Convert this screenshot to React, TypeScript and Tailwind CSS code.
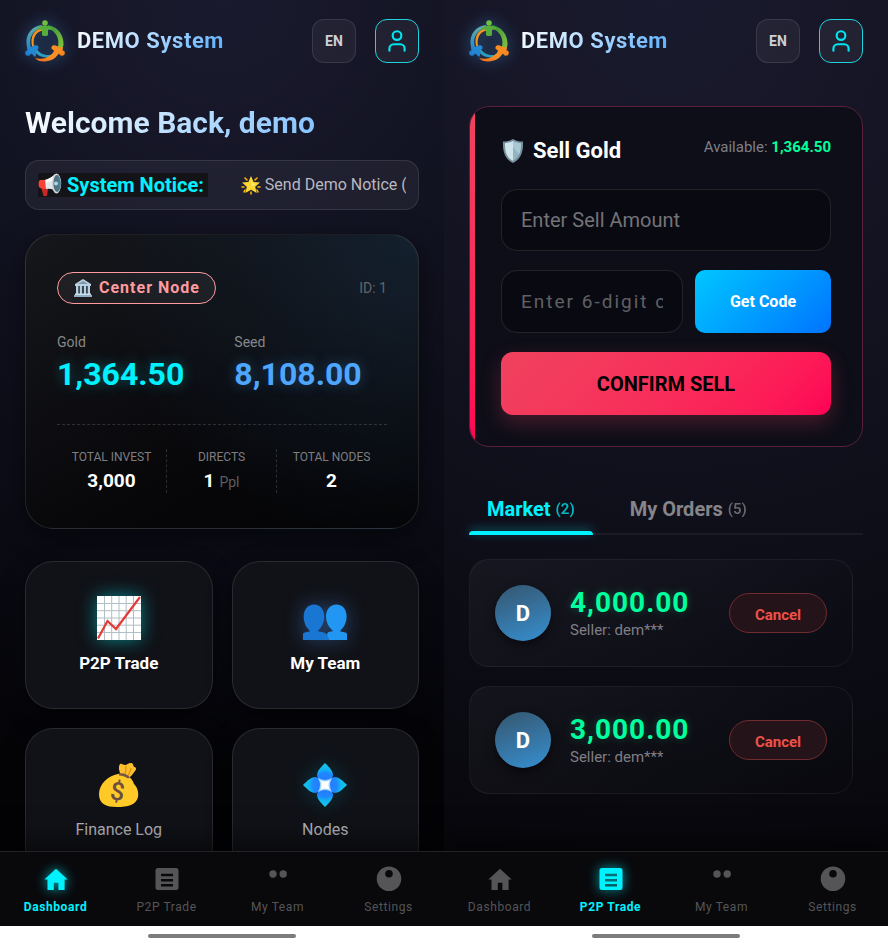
import React from "react";
import { User } from "lucide-react";

type Tab = "Dashboard" | "P2P Trade" | "My Team" | "Settings";

const tabs: Tab[] = ["Dashboard", "P2P Trade", "My Team", "Settings"];

const orders = [
  { id: 1, amount: "4,000.00", seller: "dem***" },
  { id: 2, amount: "3,000.00", seller: "dem***" },
];

const stats = [
  { label: "TOTAL INVEST", value: "3,000", unit: "" },
  { label: "DIRECTS", value: "1", unit: "Ppl" },
  { label: "TOTAL NODES", value: "2", unit: "" },
];

/* Icons */

const Logo = ({ id }: { id: string }) => (
  <svg
    viewBox="0 0 40 42"
    className="h-[42px] w-10 drop-shadow-[0_0_8px_rgba(79,172,254,0.45)]"
    aria-hidden="true"
  >
    <defs>
      <linearGradient id={`${id}-g`} x1="0" y1="0" x2="1" y2="1">
        <stop offset="0" stopColor="#2f8f3a" />
        <stop offset="1" stopColor="#8cc63f" />
      </linearGradient>
      <linearGradient id={`${id}-b`} x1="0" y1="0" x2="0" y2="1">
        <stop offset="0" stopColor="#63ada0" />
        <stop offset="1" stopColor="#2389cf" />
      </linearGradient>
      <linearGradient id={`${id}-o`} x1="0" y1="1" x2="1" y2="0">
        <stop offset="0" stopColor="#f26a1b" />
        <stop offset="1" stopColor="#ffab2e" />
      </linearGradient>
    </defs>
    {/* inner ring */}
    <path d="M17 8C9 10 5 16 7 26l2.500 2C7 19 10 12 18 10.500z" fill="#f7941e" />
    <path d="M8 29c4 8 12 10 20 7l3-3c-8 4-16 2-20-5z" fill="#2c9fc0" />
    <path d="M34 22c0 7-5 13-14 16 9 0 16-5 17-14z" fill="#7cc142" />
    {/* outer ring */}
    <path d="M17 5C7 6 .500 14 1.500 24c.200 2 .700 4 1.500 6l3.500-1C2.500 18 8 10 17 8z" fill={`url(#${id}-b)`} />
    <path d="M23 5c10 2 16 10 15.500 20l-1.500 5-4-2c2-9-2-17-10-19.500z" fill={`url(#${id}-g)`} />
    <path d="M35 31c-3 7-9 10.500-16 10.500-4 0-7-1-9-3.500 9 2 15-.500 20.500-8z" fill={`url(#${id}-o)`} />
    {/* top figure */}
    <circle cx="20" cy="3" r="2.800" fill="#6fbf44" />
    <path d="M12 9c2-3 5-3.500 8-3.500S26 6 28 9l-5 1v4.500c0 1-1 1.500-3 1.500s-3-.500-3-1.500V10z" fill="#57ad3c" />
    {/* left figure */}
    <circle cx="3" cy="33" r="2.800" fill="#1f7fd0" />
    <path d="M2 27c2 1 4 0 6-1s5-1 5.500 1-1 2.500-2.500 3.500c1 2 0 5-1 6.500L7 34l-4-1z" fill="#2487d4" />
    {/* right figure */}
    <circle cx="37" cy="33" r="2.800" fill="#f7831e" />
    <path d="M38 27c-2 1-4 0-6-1s-5-1-5.500 1 1 2.500 2.500 3.500c-1 2-1 4 0 6.500l4-3 4-1z" fill="#f98d22" />
  </svg>
);

const Megaphone = () => (
  <svg viewBox="0 0 24 24" className="h-6 w-6 shrink-0" aria-hidden="true">
    <path d="M5 14l5 2-1 7H5.500L3 14z" fill="#c62828" />
    <path d="M2 7c-2 1-2 7 0 8l4 1h4l1-10-5 1z" fill="#f44336" />
    <path d="M7 7c4-1 7-3 10-6l3 19c-3-3-7-5-12-4z" fill="#dfe7ea" />
    <path d="M8 7l8-4v4L8 10z" fill="#fafafa" />
    <ellipse cx="18.500" cy="10.500" rx="4.700" ry="10" fill="#cfd8dc" />
    <ellipse cx="19" cy="10.500" rx="3.600" ry="8.500" fill="#546e7a" />
    <path d="M19 2c2 1 3.600 4 3.600 8.500S21 18 19 19c1-5 1-12 0-17z" fill="#3e7f91" />
    <circle cx="18" cy="10.500" r="2" fill="#b0d5e0" />
  </svg>
);

const GlowStar = () => (
  <svg viewBox="0 0 20 20" className="h-5 w-5 shrink-0" aria-hidden="true">
    <path
      d="M4 3l2 2M16 3l-2 2M1 12h2M17 12h2M10 17v2M4 15l-1 2M16 15l1 2"
      stroke="#ffb300"
      strokeWidth="1.600"
      strokeLinecap="round"
    />
    <path d="M10 1l2.600 6 6.400.6-4.800 4.200 1.500 6.200L10 14.700 4.300 18l1.500-6.200L1 7.600 7.400 7z" fill="#fdd835" />
    <path d="M10 4l1.500 4.500 3.500.5-4 2z" fill="#fff176" />
  </svg>
);

const Building = () => (
  <svg viewBox="0 0 20 20" className="h-5 w-5 shrink-0" aria-hidden="true">
    <path d="M10 1l8 5v2H2V6z" fill="#b8d0e2" />
    <path d="M10 3l5 3H5z" fill="#7d97ab" />
    <path d="M3 8h14v8H3z" fill="#37474f" />
    <path d="M3 8h2.200v8H3zM6.900 8h2v8h-2zM11 8h2v8h-2zM14.800 8H17v8h-2.200z" fill="#b8d0e2" />
    <path d="M2 15.500h16V17H2z" fill="#cfe0ed" />
    <path d="M1 17h18v2H1z" fill="#93afc3" />
  </svg>
);

const Shield = () => (
  <svg viewBox="0 0 24 26" className="h-[26px] w-6 shrink-0" aria-hidden="true">
    <path d="M12 1c3 2 6 2.500 10 2.500C22.500 14 20 21 12 25 4 21 1.500 14 2 3.500 6 3.500 9 3 12 1z" fill="#78909c" />
    <path d="M12 3c3 1.600 5 2 8 2.200C20.200 14 18 19.500 12 22.800 6 19.500 3.800 14 4 5.200 7 5 9 4.600 12 3z" fill="#90b4c1" />
    <path d="M12 3v19.800C6 19.500 3.800 14 4 5.200 7 5 9 4.600 12 3z" fill="#cfe3ea" />
    <path d="M12 3c3 1.600 5 2 8 2.200 0 5-.6 8-2 11L12 9z" fill="#a9c8d3" />
  </svg>
);

const ChartIcon = () => (
  <svg viewBox="0 0 44 44" className="h-11 w-11 drop-shadow-[0_0_9px_rgba(0,242,254,0.5)]" aria-hidden="true">
    <rect width="44" height="44" fill="#fff" />
    <path
      d="M7.500 0v44M14.700 0v44M22 0v44M29.200 0v44M36.500 0v44M0 7.500h44M0 14.700h44M0 22h44M0 29.200h44M0 36.500h44"
      stroke="#b0bec5"
      strokeWidth="1"
    />
    <path d="M1 42.500L10.500 25l8.500 8L43 1" fill="none" stroke="#e53935" strokeWidth="2.200" />
  </svg>
);

const PeopleIcon = () => (
  <svg viewBox="0 0 44 44" className="h-11 w-11 drop-shadow-[0_0_10px_rgba(79,150,254,0.4)]" aria-hidden="true">
    <path
      d="M11 8.500c6.500 0 10.300 5 10.300 12 0 6-2.800 11-6.300 14.500 1 1 4 .8 6 1.500 3 1 4 3 4.500 7.500H0v-6c0-2 5-1.600 7-3C3 31.500.7 26.500.7 20.500.7 13.500 4.500 8.500 11 8.500z"
      fill="#1976d2"
    />
    <path
      d="M33.500 8.500c6.500 0 10.100 5 10.100 12 0 6-2.600 11-6.600 14.500 2 1.400 7 1 7 3v6H25.500c.3-3-2.500-4-1-7 1-2 4.500-1 5.500-2-4-3.500-7-8.500-7-14.500 0-7 4-12 10.500-12z"
      fill="#2196f3"
    />
  </svg>
);

const MoneyIcon = () => (
  <svg viewBox="0 0 44 44" className="h-11 w-11" aria-hidden="true">
    <path d="M24 12c-2-4-3-8-1-11 2-1 3 1 5 1s3-2 6-2c2 0 2 2 3 4 2 0 3 2 1 4-2 3-4 5-6 7z" fill="#fbc02d" />
    <path d="M29 3c0 4 0 7-2 10M34 5c0 3-2 6-4 9" fill="none" stroke="#e08e0b" strokeWidth="1.200" />
    <path d="M21 11c7-1 14 3 16 10 3 3 5 8 4 13-2 8-10 10-21 10C9 44 2 41 2 31c0-10 9-18 19-20z" fill="#ffca28" />
    <path d="M22 10.500c4-1 9 1 11 4l-2 1c-3-2-6-3-9-3z" fill="#795548" />
    <text
      x="20.500"
      y="37"
      textAnchor="middle"
      fill="#6d4c41"
      transform="rotate(8 20 28)"
      className="font-['Roboto',sans-serif] text-[25px] font-medium"
    >
      $
    </text>
  </svg>
);

const NodeIcon = () => (
  <svg viewBox="0 0 44 44" className="h-11 w-11 drop-shadow-[0_0_10px_rgba(0,200,254,0.2)]" aria-hidden="true">
    <defs>
      <radialGradient id="petal" gradientUnits="userSpaceOnUse" cx="22" cy="22" r="22">
        <stop offset="0.200" stopColor="#2979ff" />
        <stop offset="0.550" stopColor="#1e88ff" />
        <stop offset="0.700" stopColor="#12b3ee" />
        <stop offset="1" stopColor="#18c8ee" />
      </radialGradient>
    </defs>
    <path d="M22 0c5 5 8 8 8 13l-2 4h-12l-2-4c0-5 3-8 8-13z" fill="url(#petal)" />
    <path d="M22 44c5-5 8-8 8-13l-2-4h-12l-2 4c0 5 3 8 8 13z" fill="url(#petal)" />
    <path d="M0 22c5-5 8-8 13-8l4 2v12l-4 2c-5 0-8-3-13-8z" fill="url(#petal)" />
    <path d="M44 22c-5-5-8-8-13-8l-4 2v12l4 2c5 0 8-3 13-8z" fill="url(#petal)" />
    <path d="M15 15q7 4 14 0-4 7 0 14-7-4-14 0 4-7 0-14z" fill="#9fd4ff" />
    <path d="M17 17q5 3 10 0-3 5 0 10-5-3-10 0 3-5 0-10z" fill="#fff" />
  </svg>
);

const NavIcon = ({ tab }: { tab: Tab }) => {
  switch (tab) {
    case "Dashboard":
      return <path d="M12 2.800L.3 13.500H3.500V24H9.800V16.800h4.600V24h6.200V13.500h3.100z" fill="currentColor" />;
    case "P2P Trade":
      return (
        <path
          fillRule="evenodd"
          d="M3 2h18a2.500 2.500 0 012.500 2.500v17A2.500 2.500 0 0121 24H3A2.500 2.500 0 01.500 21.500v-17A2.500 2.500 0 013 2zM6 7.800v2.400h12V7.800zM6 13v2.400h12V13zM6 18v2.400h12V18z"
          fill="currentColor"
        />
      );
    case "My Team":
      return (
        <g fill="currentColor">
          <circle cx="7" cy="8" r="3.700" />
          <circle cx="17.200" cy="8" r="3.700" />
        </g>
      );
    default:
      return (
        <path
          fillRule="evenodd"
          d="M12 .500a12.300 12.300 0 110 24.600A12.300 12.300 0 0112 .500zM12 4a3.800 3.800 0 100 7.600A3.800 3.800 0 0012 4z"
          fill="currentColor"
        />
      );
  }
};

/* Shared layout */

const Header = ({ id }: { id: string }) => (
  <header className="flex items-center justify-between pt-[19px]">
    <div className="flex items-center gap-3">
      <Logo id={id} />
      <span className="bg-linear-135 from-white to-[#4facfe] bg-clip-text text-[22px] leading-8 font-bold tracking-wide text-transparent">
        DEMO System
      </span>
    </div>
    <div className="flex items-center gap-[19px]">
      <button className="h-11 w-11 rounded-xl border border-white/10 bg-white/5 text-sm font-bold text-[#cfcfd6]">
        EN
      </button>
      <button
        aria-label="Profile"
        className="flex h-11 w-11 items-center justify-center rounded-xl border border-[#1fd3dd] bg-white/5 text-[#00e5f0]"
      >
        <User size={26} strokeWidth={2} />
      </button>
    </div>
  </header>
);

const BottomNav = ({ active }: { active: Tab }) => (
  <footer className="shrink-0">
    <nav className="grid h-[75px] grid-cols-4 border-t border-white/10 bg-[#09090c] shadow-[0_-10px_24px_rgba(0,0,0,0.5)]">
      {tabs.map((tab) => (
        <a
          key={tab}
          href="#"
          className={
            tab === active
              ? "flex flex-col items-center gap-[7px] pt-[14px] text-[#00f2fe]"
              : "flex flex-col items-center gap-[7px] pt-[14px] text-[#555558]"
          }
        >
          <svg
            viewBox="0 0 24 26"
            className={
              tab === active
                ? "h-[26px] w-6 overflow-visible drop-shadow-[0_0_6px_rgba(0,242,254,0.7)]"
                : "h-[26px] w-6 overflow-visible"
            }
            aria-hidden="true"
          >
            <NavIcon tab={tab} />
          </svg>
          <span
            className={
              tab === active
                ? "text-xs leading-4 font-bold tracking-wider"
                : "text-xs leading-4 tracking-wider"
            }
          >
            {tab}
          </span>
        </a>
      ))}
    </nav>
    <div className="flex h-5 items-center justify-center bg-white">
      <div className="h-1 w-1/3 rounded-full bg-[#7b7c7b]" />
    </div>
  </footer>
);

const Phone = ({ active, children }: { active: Tab; children: React.ReactNode }) => (
  <section
    className={
      active === "Dashboard"
        ? "flex h-full min-w-0 flex-col overflow-hidden bg-[radial-gradient(circle_at_50%_0%,#1a1a2e_0%,#0b0c16_55%,#040407_80%)]"
        : "flex h-full min-w-0 flex-col overflow-hidden bg-[radial-gradient(circle_at_50%_0%,#1a1a2e_0%,#0f0f1a_55%,#050508_100%)]"
    }
  >
    <main className="min-h-0 flex-1 overflow-hidden px-[25px]">
      <Header id={active === "Dashboard" ? "left" : "right"} />
      {children}
    </main>
    <BottomNav active={active} />
  </section>
);

/* Screens */

const MenuCard = ({
  icon,
  label,
  strong,
}: {
  icon: React.ReactNode;
  label: string;
  strong?: boolean;
}) => (
  <a
    href="#"
    className="flex h-[148px] flex-col items-center gap-[11px] rounded-[28px] border border-white/10 bg-[#101217] pt-[34px] shadow-[0_8px_24px_rgba(0,0,0,0.4)]"
  >
    {icon}
    <span
      className={
        strong
          ? "text-[17px] leading-6 font-bold text-white"
          : "text-base leading-6 text-[#b4b4b8]"
      }
    >
      {label}
    </span>
  </a>
);

const Dashboard = () => (
  <Phone active="Dashboard">
    <h1 className="mt-10 w-full bg-linear-135 from-white to-[#4facfe] bg-clip-text text-[30px] leading-10 font-bold text-transparent">
      Welcome Back, demo
    </h1>

    <div className="mt-[17px] flex h-[50px] items-center overflow-hidden rounded-[14px] border border-white/10 bg-white/5 px-3">
      <div className="flex shrink-0 items-center gap-[5px] bg-[#141418] pr-1 text-[20px] leading-6 font-bold text-[#00f2fe]">
        <Megaphone />
        System Notice:
      </div>
      <div className="min-w-0 flex-1 overflow-hidden pl-[33px]">
        <div className="flex items-center gap-1 text-base leading-6 whitespace-nowrap text-[#b8b8c0]">
          <GlowStar />
          Send Demo Notice (
        </div>
      </div>
    </div>

    <div className="mt-6 rounded-[28px] border border-white/10 bg-[radial-gradient(circle_at_100%_0%,#14202e_0%,transparent_65%),linear-gradient(150deg,#16171b_0%,#08080b_60%,#020203_100%)] px-[31px] pt-[37px] pb-[35px] shadow-[0_8px_28px_rgba(0,0,0,0.5)]">
      <div className="flex items-center justify-between">
        <span className="flex h-8 items-center gap-[6px] rounded-full border border-[#ff9a9e] bg-white/5 px-[15px] text-base leading-5 font-bold tracking-[1px] text-[#ff9a9e]">
          <Building />
          Center Node
        </span>
        <span className="text-sm text-[#626469]">ID: 1</span>
      </div>

      <div className="mt-7 flex gap-[50px]">
        <div>
          <div className="text-sm leading-5 text-[#86878a]">Gold</div>
          <div className="mt-1 text-[32px] leading-9 font-bold text-[#00f2fe] [text-shadow:0_0_14px_rgba(0,242,254,0.35)]">
            1,364.50
          </div>
        </div>
        <div>
          <div className="text-sm leading-5 text-[#86878a]">Seed</div>
          <div className="mt-1 text-[32px] leading-9 font-bold text-[#4da6ff] [text-shadow:0_0_14px_rgba(79,172,254,0.35)]">
            8,108.00
          </div>
        </div>
      </div>

      <div className="mt-8 grid grid-cols-3 border-t border-dashed border-white/15 pt-6 text-center">
        {stats.map((stat) => (
          <div
            key={stat.label}
            className="border-r border-dashed border-white/15 last:border-transparent"
          >
            <div className="text-xs leading-4 text-[#7e7e82]">{stat.label}</div>
            <div className="mt-1 text-[19px] leading-6 font-bold text-white">
              {stat.value}
              {stat.unit && (
                <span className="ml-[5px] text-sm font-normal text-[#5d5d61]">{stat.unit}</span>
              )}
            </div>
          </div>
        ))}
      </div>
    </div>

    <div className="mt-8 grid grid-cols-2 gap-[19px]">
      <MenuCard icon={<ChartIcon />} label="P2P Trade" strong />
      <MenuCard icon={<PeopleIcon />} label="My Team" strong />
      <MenuCard icon={<MoneyIcon />} label="Finance Log" />
      <MenuCard icon={<NodeIcon />} label="Nodes" />
    </div>
  </Phone>
);

const Trade = () => (
  <Phone active="P2P Trade">
    <form
      onSubmit={(e) => e.preventDefault()}
      className="relative mt-[43px] overflow-hidden rounded-[20px] border border-[#5a1f3c] bg-[#0e0e18] px-[31px] pt-7 pb-[31px]"
    >
      <div className="absolute inset-y-0 left-0 w-[5px] bg-linear-to-b from-[#f0425f] to-[#ff0055]" />
      <div className="flex items-start justify-between">
        <h2 className="flex items-center gap-2 text-[22px] leading-8 font-bold text-white">
          <Shield />
          Sell Gold
        </h2>
        <div className="text-[15px] leading-6 text-[#7f7f88]">
          Available: <span className="font-bold text-[#00ff9d]">1,364.50</span>
        </div>
      </div>

      <input
        type="text"
        aria-label="Enter Sell Amount"
        placeholder="Enter Sell Amount"
        className="mt-[22px] block h-[62px] w-full rounded-2xl border border-white/10 bg-[#090911] px-[19px] text-xl text-white placeholder:text-[#737378]"
      />

      <div className="mt-[19px] flex gap-3">
        <input
          type="text"
          aria-label="Enter 6-digit code"
          placeholder="Enter 6-digit code"
          className="h-[63px] min-w-0 flex-1 rounded-2xl border border-white/10 bg-[#090911] px-[19px] text-[19px] tracking-[2px] text-white placeholder:text-[#606065]"
        />
        <button
          type="button"
          className="h-[63px] w-[136px] shrink-0 rounded-[10px] bg-linear-135 from-[#00c6ff] to-[#0072ff] text-base font-bold text-white"
        >
          Get Code
        </button>
      </div>

      <button
        type="submit"
        className="mt-[19px] h-[63px] w-full rounded-xl bg-linear-135 from-[#f0425f] to-[#ff0055] text-[20px] font-bold text-black shadow-[0_8px_20px_rgba(245,66,95,0.25)]"
      >
        CONFIRM SELL
      </button>
    </form>

    <div className="mt-10 flex gap-[19px] border-b-2 border-white/5" role="tablist">
      <button
        role="tab"
        aria-selected="true"
        className="relative flex h-[46px] items-center gap-[5px] px-[18px] pb-[2px] text-[20px] leading-6 font-bold text-[#00f2fe]"
      >
        Market <span className="text-[15px] font-semibold opacity-75">(2)</span>
        <span className="absolute inset-x-0 -bottom-[2px] h-1 rounded-t bg-[#00f2fe] shadow-[0_-2px_10px_rgba(0,242,254,0.4)]" />
      </button>
      <button
        role="tab"
        aria-selected="false"
        className="flex h-[46px] items-center gap-[5px] px-[18px] pb-[2px] text-[20px] leading-6 font-bold text-[#85858a]"
      >
        My Orders <span className="text-[15px] font-semibold opacity-75">(5)</span>
      </button>
    </div>

    <ul className="mt-6 flex flex-col gap-[19px] pr-[10px]">
      {orders.map((order) => (
        <li
          key={order.id}
          className="flex h-[108px] items-center gap-[19px] rounded-[20px] border border-white/5 bg-linear-135 from-white/4 to-transparent px-[25px]"
        >
          <div className="flex h-14 w-14 shrink-0 items-center justify-center rounded-full bg-linear-160 from-[#34566f] to-[#3490d2] text-[22px] font-bold text-white shadow-[0_4px_10px_rgba(0,0,0,0.5)]">
            D
          </div>
          <div className="min-w-0 flex-1 pt-[2px]">
            <div className="text-[28px] leading-8 font-bold tracking-[1px] text-[#00ff9d] [text-shadow:0_0_10px_rgba(0,255,157,0.25)]">
              {order.amount}
            </div>
            <div className="text-[15px] leading-[22px] text-[#7f7f86]">Seller: {order.seller}</div>
          </div>
          <button className="h-10 w-[98px] shrink-0 rounded-full border border-[#702b2e] bg-[#25131a] pt-1 text-[15px] font-bold text-[#ee5147]">
            Cancel
          </button>
        </li>
      ))}
    </ul>
  </Phone>
);

const App = () => {
  return (
    <div className="grid h-screen grid-cols-2 bg-black font-['Roboto',sans-serif]">
      <Dashboard />
      <Trade />
    </div>
  );
};

export default App;
